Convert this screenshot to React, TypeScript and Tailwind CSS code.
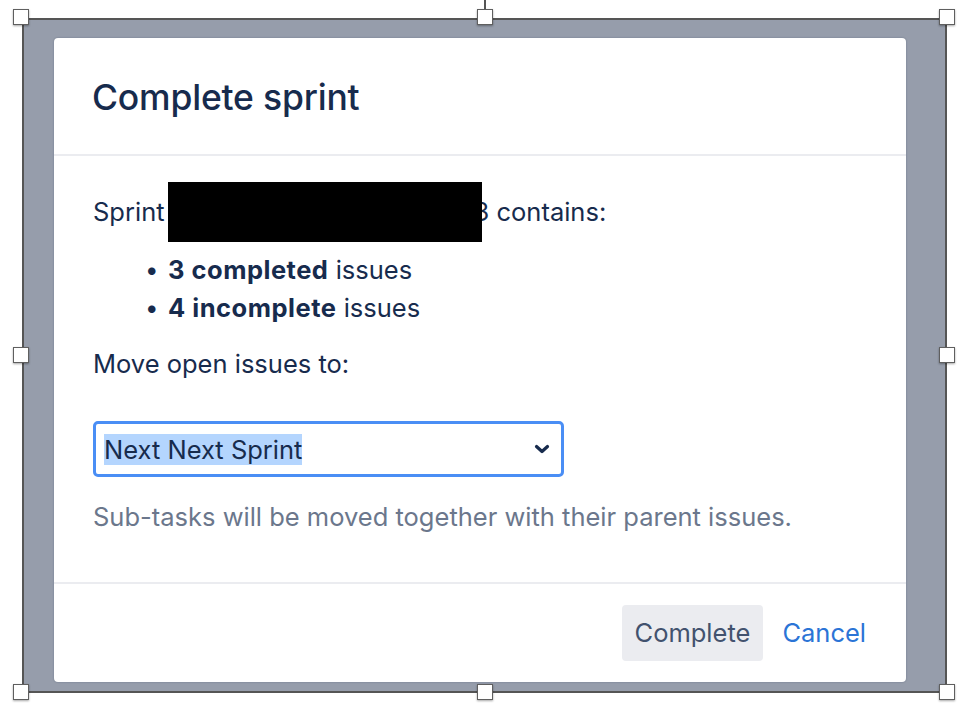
const font = { fontFamily: 'Inter, "Noto Sans", sans-serif' };

function Handle({ className }: { className: string }) {
  return (
    <div
      className={`absolute w-[16px] h-[16px] bg-white border border-[#5f5f5f] shadow-[0_1px_2px_rgba(0,0,0,0.35)] ${className}`}
    />
  );
}

export default function App() {
  return (
    <div className="relative w-[976px] h-[712px] bg-white overflow-hidden" style={font}>
      {/* selection frame */}
      <div className="absolute left-[22px] top-[18px] w-[925px] h-[675px] border-2 border-[#555555]">
        <div className="w-full h-full bg-[#969dab] pl-[30px] pt-[18px]">
          <div className="w-[852px] h-[644px] bg-white rounded-[4px] shadow-[0_0_2px_rgba(9,30,66,0.3)] flex flex-col text-[#172B4D]">
            <div className="h-[116px] flex items-center px-[38px] pt-[4px] shrink-0">
              <h1 className="text-[35.5px] font-medium tracking-[-0.2px]">Complete sprint</h1>
            </div>
            <div className="h-[2px] bg-[#ebecf0] shrink-0" />
            <div className="h-[426px] px-[39px] pt-[26px] text-[25.5px] leading-[38px] shrink-0">
              <div className="flex items-center">
                <span>Sprint</span>
                <span className="relative z-10 ml-[3px] w-[314px] h-[60px] bg-black" />
                <span className="ml-[-8px] whitespace-pre">3 contains:</span>
              </div>
              <ul className="mt-[9px] pl-[52px]">
                <li className="flex items-center">
                  <span className="w-[23px] text-[24px]">•</span>
                  <span>
                    <b className="font-bold tracking-[0.5px]">3 completed</b> issues
                  </span>
                </li>
                <li className="flex items-center">
                  <span className="w-[23px] text-[24px]">•</span>
                  <span>
                    <b className="font-bold tracking-[0.5px]">4 incomplete</b> issues
                  </span>
                </li>
              </ul>
              <p className="mt-[18px]">Move open issues to:</p>
              <div className="mt-[38px] w-[471px] h-[56px] border-[3px] border-[#4a8ef5] rounded-[5px] flex items-center pl-[8px] pr-[11px]">
                <span className="bg-[#b4d5fe] leading-[31px]">Next Next Sprint</span>
                <svg className="ml-auto" width="16" height="12" viewBox="0 0 16 12">
                  <path d="M2.5 3.5 L8 8.5 L13.5 3.5" fill="none" stroke="#172B4D" strokeWidth="3.2" strokeLinecap="round" strokeLinejoin="round" />
                </svg>
              </div>
              <p className="mt-[21px] text-[#6B778C]">Sub-tasks will be moved together with their parent issues.</p>
            </div>
            <div className="h-[2px] bg-[#ebecf0] shrink-0" />
            <div className="flex-1 flex items-center justify-end pr-[40px] gap-[19px] text-[25.5px]">
              <button className="h-[56px] px-[13px] rounded-[4px] bg-[#ebecf0] text-[#42526E]">Complete</button>
              <a className="text-[#2b74d6]">Cancel</a>
            </div>
          </div>
        </div>
      </div>
      {/* handle stem */}
      <div className="absolute left-[484px] top-0 w-[2px] h-[10px] bg-[#555555]" />
      <Handle className="left-[13px] top-[9px]" />
      <Handle className="left-[477px] top-[9px]" />
      <Handle className="left-[939px] top-[9px]" />
      <Handle className="left-[13px] top-[347px]" />
      <Handle className="left-[939px] top-[347px]" />
      <Handle className="left-[13px] top-[684px]" />
      <Handle className="left-[477px] top-[684px]" />
      <Handle className="left-[939px] top-[684px]" />
    </div>
  );
}
